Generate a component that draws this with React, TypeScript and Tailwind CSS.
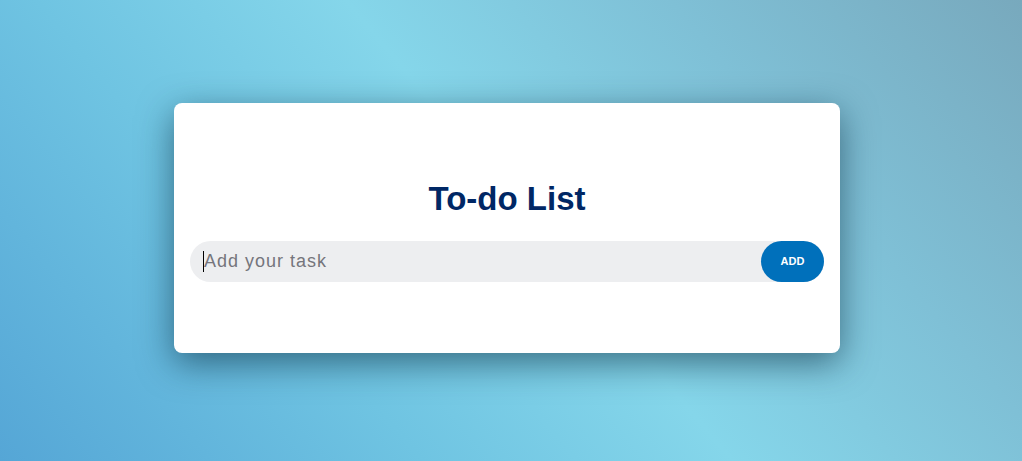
import React from "react";

export default function App() {
  return (
    <div
      className="w-full h-[461px] overflow-hidden flex justify-center items-start pt-[103px] pr-[8px] bg-[linear-gradient(50deg,#55a6d6_0%,#6fc4e2_30%,#85d6ea_52%,#7fc0d6_75%,#78a9bd_100%)]"
      style={{ fontFamily: '"Liberation Sans", Arial, sans-serif' }}
    >
      <div className="w-[666px] h-[250px] bg-white rounded-[8px] shadow-[0_10px_35px_rgba(10,45,65,0.6)] px-[16px] pt-[77px] flex flex-col">
        <h2 className="text-[33px] leading-[37px] font-bold text-[#002765] text-center">
          To-do List
        </h2>
        <div className="relative mt-[24px] h-[41px] flex items-center bg-[#edeef0] rounded-full">
          <span className="absolute left-[13px] top-[10px] w-px h-[21px] bg-black" />
          <input
            type="text"
            placeholder="Add your task"
            className="flex-1 h-full bg-transparent outline-none border-none pl-[14px] text-[18px] tracking-[1px] text-[#333] placeholder:text-[#75757c] caret-black"
            style={{ fontFamily: '"Liberation Sans", Arial, sans-serif' }}
          />
          <button
            className="h-full w-[63px] rounded-full bg-[#0070bb] text-white text-[11px] font-bold"
            style={{ fontFamily: '"Liberation Sans", Arial, sans-serif' }}
          >
            ADD
          </button>
        </div>
      </div>
    </div>
  );
}
